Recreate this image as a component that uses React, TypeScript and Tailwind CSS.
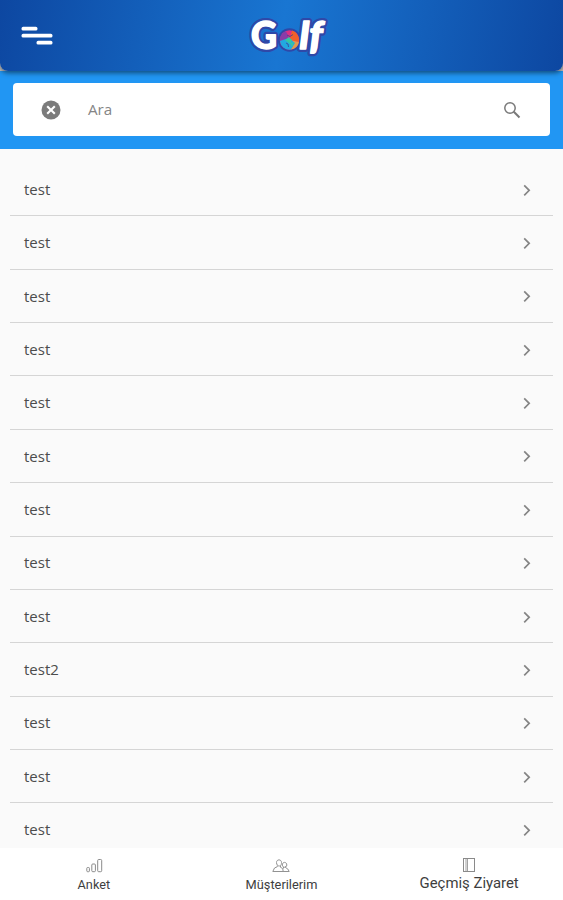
import React from "react";

const rows = ["test", "test", "test", "test", "test", "test", "test", "test", "test", "test2", "test", "test", "test"];

function Logo() {
  return (
    <svg className="block overflow-visible" width="96" height="64" viewBox="0 0 96 64" role="img" aria-label="Golf">
      <g fontFamily="Lato, 'Open Sans', sans-serif" fontWeight="900" fill="#fff" strokeLinejoin="round">
        <circle cx="55.5" cy="36" r="11.7" fill="#2f48a8" />
        <g stroke="#2f48a8" strokeWidth="6" paintOrder="stroke">
          <text x="17" y="45" fontSize="38" textLength="26" lengthAdjust="spacingAndGlyphs">G</text>
          <text x="65.5" y="45" fontSize="38" fontStyle="italic" textLength="23" lengthAdjust="spacingAndGlyphs">lf</text>
        </g>
        <g stroke="#fff" strokeWidth="1.4" aria-hidden="true">
          <text x="17" y="45" fontSize="38" textLength="26" lengthAdjust="spacingAndGlyphs">G</text>
          <text x="65.5" y="45" fontSize="38" fontStyle="italic" textLength="23" lengthAdjust="spacingAndGlyphs">lf</text>
        </g>
      </g>
      <g transform="translate(7 8)">
        <circle cx="48.5" cy="28" r="9.7" fill="#dd2f86" />
        <path d="M48.5 28 38.8 29A9.7 9.7 0 0 1 45 19Z" fill="#8a3ca8" />
        <path d="M48.5 28 51 18.6A9.7 9.7 0 0 1 58 30Z" fill="#f0602c" />
        <path d="M48.5 28 58 30A9.7 9.7 0 0 1 50 37.6Z" fill="#e39a4a" />
        <path d="M48 26 38.9 29A9.7 9.7 0 0 0 50 37.6L54 31Z" fill="#22a9e0" />
        <path d="M44 28l4-3 3 3-2 4zM49 31l4-1-2 5z" fill="#38c6a0" />
        <path d="M46 23l3 1.5 3-2M45 31l2 1 .5 3" fill="none" stroke="#3b3f95" strokeWidth=".8" />
      </g>
    </svg>
  );
}

function Header() {
  return (
    <header className="relative z-10 h-[71px] rounded-b-[8px] bg-[linear-gradient(100deg,#0d47a1_0%,#1976d2_50%,#0d47a1_100%)] shadow-[0_2px_5px_rgba(0,0,0,0.5)]">
      <div className="grid h-full grid-cols-[1fr_96px_1fr] items-center">
        <svg className="ml-[21px] mt-px" width="32" height="20" viewBox="0 0 32 20" fill="#fff" aria-hidden="true">
          <rect x="0.5" y="0.8" width="16" height="3.8" rx="1.7" />
          <rect x="0.5" y="7.8" width="31" height="3.8" rx="1.7" />
          <rect x="15.5" y="14.8" width="16" height="3.8" rx="1.7" />
        </svg>
        <Logo />
      </div>
    </header>
  );
}

function SearchBar() {
  return (
    <div className="h-[78px] bg-[#2196f3] px-[13px] pt-[12px]">
      <div className="flex h-[53px] items-center rounded-[4px] bg-white pr-[29px] pl-[28px]">
        <svg width="20" height="20" viewBox="0 0 20 20" aria-hidden="true">
          <circle cx="10" cy="10" r="9.5" fill="#7b7b7b" />
          <path d="m6.2 6.2 7.6 7.6m0-7.6-7.6 7.6" stroke="#fff" strokeWidth="2.1" />
        </svg>
        <span className="ml-[27px] flex-1 text-[15.2px] text-[#858585]">Ara</span>
        <svg width="18" height="18" viewBox="0 0 18 18" fill="none" stroke="#797979" aria-hidden="true">
          <circle cx="7" cy="7" r="5.2" strokeWidth="1.5" />
          <path d="m10.8 10.8 5.7 5.7" strokeWidth="2" />
        </svg>
      </div>
    </div>
  );
}

function Row({ label }: { label: string }) {
  return (
    <li className="flex h-[53.35px] items-center justify-between border-b border-[#d5d5d5] pr-[21px] pl-[14px] text-[15px] text-[#4c4c4c]">
      <span>{label}</span>
      <svg className="mt-px" width="10" height="14" viewBox="0 0 10 14" fill="none" stroke="#858585" strokeWidth="1.7" aria-hidden="true">
        <path d="m2.2 2.3 5 5-5 5" />
      </svg>
    </li>
  );
}

function BarsIcon() {
  return (
    <svg width="18" height="16" viewBox="0 0 18 16" fill="none" stroke="#8a8a8a" aria-hidden="true">
      <rect x="1.8" y="9.5" width="2.6" height="4.2" rx=".8" />
      <rect x="6.8" y="6" width="3.6" height="7.7" rx="1" />
      <rect x="12.7" y="1.5" width="4" height="12.2" rx="1" />
    </svg>
  );
}

function PeopleIcon() {
  return (
    <svg width="18" height="16" viewBox="0 0 18 16" fill="none" stroke="#929292" aria-hidden="true">
      <path d="M4.5 4.5C4.5 1 9.5 1 9.5 4.5S7.8 8 7 8 4.5 7 4.5 4.5ZM5.3 7.5v1.2L2.5 10 .8 13.5h16.4L15.8 11l-2.3-1.5V8.3" />
      <path d="M10.3 7c0-3.5 4.5-3.5 4.5 0 0 3-4.5 3-4.5 0ZM8.5 7.8v1.5l2.2 1.2.5 3M11.5 9v1.5" />
    </svg>
  );
}

function BookIcon() {
  return (
    <svg width="14" height="16" viewBox="0 0 14 16" fill="none" stroke="#8a8a8a" aria-hidden="true">
      <rect x="1.5" y="1.5" width="11" height="13" />
      <path d="M4 1.5v13M5.5 1.5v13" strokeWidth=".8" />
    </svg>
  );
}

function Navigation() {
  return (
    <nav className="grid h-[52px] shrink-0 grid-cols-3 bg-white font-[Roboto,sans-serif] text-[#3e3e3e]">
      <div className="flex flex-col items-center pt-[10px]">
        <BarsIcon />
        <span className="mt-[2px] text-[12.7px] leading-[18px]">Anket</span>
      </div>
      <div className="flex flex-col items-center pt-[10px]">
        <PeopleIcon />
        <span className="mt-[2px] text-[12.8px] leading-[18px]">Müşterilerim</span>
      </div>
      <div className="flex flex-col items-center pt-[9px]">
        <BookIcon />
        <span className="mt-[1px] text-[14.9px] leading-[18px]">Geçmiş Ziyaret</span>
      </div>
    </nav>
  );
}

export default function App() {
  return (
    <div className="flex h-screen w-full flex-col overflow-hidden bg-[#fafafa] font-['Open_Sans','Noto_Sans',sans-serif]">
      <div className="h-[149px] shrink-0 bg-[#c4c4c4]">
        <Header />
        <SearchBar />
      </div>
      <main className="min-h-0 flex-1 overflow-hidden px-[10px] pt-[14.1px]">
        <ul>
          {rows.map((label, index) => <Row key={index} label={label} />)}
        </ul>
      </main>
      <Navigation />
    </div>
  );
}
